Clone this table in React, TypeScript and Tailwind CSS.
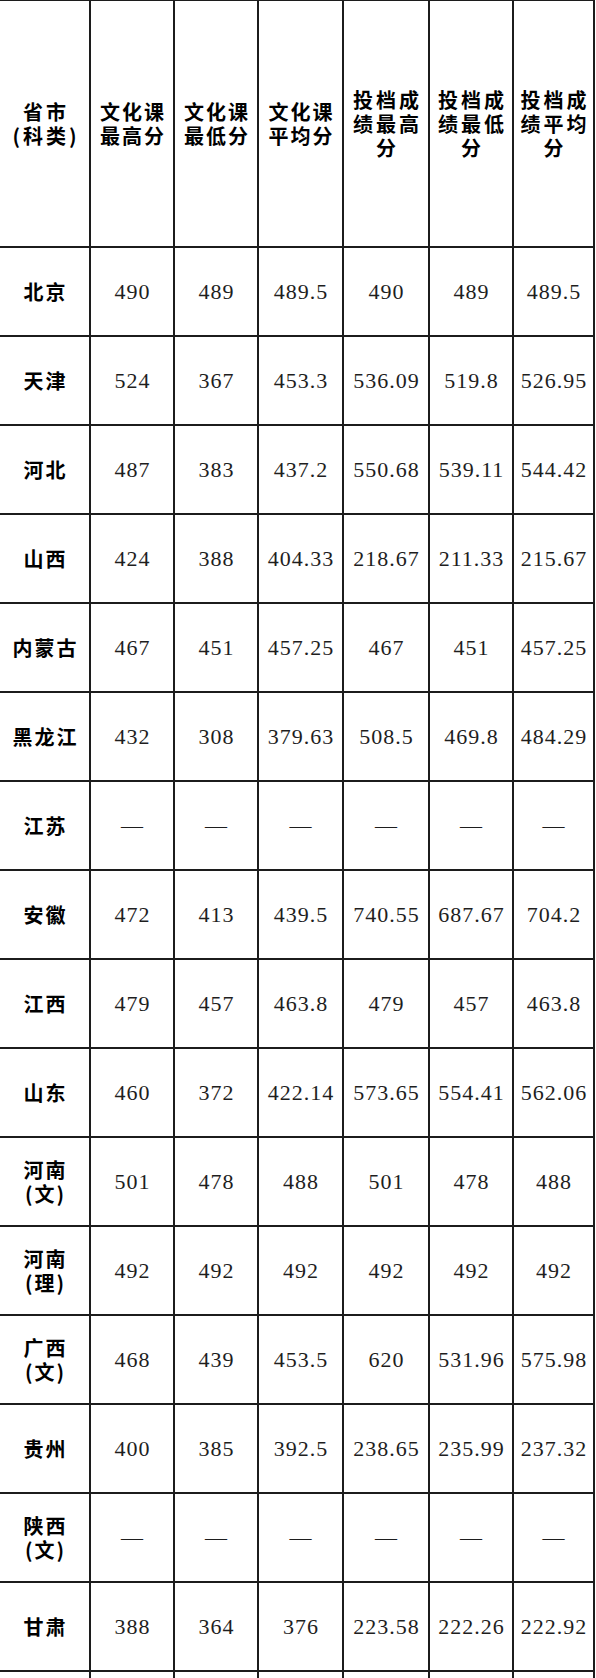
const rows: string[][] = [
  ["北京", "490", "489", "489.5", "490", "489", "489.5"],
  ["天津", "524", "367", "453.3", "536.09", "519.8", "526.95"],
  ["河北", "487", "383", "437.2", "550.68", "539.11", "544.42"],
  ["山西", "424", "388", "404.33", "218.67", "211.33", "215.67"],
  ["内蒙古", "467", "451", "457.25", "467", "451", "457.25"],
  ["黑龙江", "432", "308", "379.63", "508.5", "469.8", "484.29"],
  ["江苏", "—", "—", "—", "—", "—", "—"],
  ["安徽", "472", "413", "439.5", "740.55", "687.67", "704.2"],
  ["江西", "479", "457", "463.8", "479", "457", "463.8"],
  ["山东", "460", "372", "422.14", "573.65", "554.41", "562.06"],
  ["河南|(文)", "501", "478", "488", "501", "478", "488"],
  ["河南|(理)", "492", "492", "492", "492", "492", "492"],
  ["广西|(文)", "468", "439", "453.5", "620", "531.96", "575.98"],
  ["贵州", "400", "385", "392.5", "238.65", "235.99", "237.32"],
  ["陕西|(文)", "—", "—", "—", "—", "—", "—"],
  ["甘肃", "388", "364", "376", "223.58", "222.26", "222.92"],
  ["", "", "", "", "", "", ""],
];

const headers: string[][] = [
  ["省市", "(科类)"],
  ["文化课", "最高分"],
  ["文化课", "最低分"],
  ["文化课", "平均分"],
  ["投档成", "绩最高", "分"],
  ["投档成", "绩最低", "分"],
  ["投档成", "绩平均", "分"],
];

const cjk = { fontFamily: '"Noto Sans CJK SC", "Noto Sans", sans-serif' };
const serif = { fontFamily: '"Liberation Serif", "Noto Sans CJK SC", serif' };

export default function App() {
  return (
    <div className="min-h-screen w-[596px] bg-white">
      <div className="grid w-[595px] grid-cols-[91px_84px_84px_85px_86px_84px_81px] border-t border-[#1c1c1c]">
        {headers.map((lines, i) => (
          <div
            key={i}
            className="flex h-[247px] flex-col items-center justify-center border-b-2 border-r-2 border-[#1c1c1c] text-[20px] font-bold leading-[24px] text-black"
            style={cjk}
          >
            {lines.map((line) => (
              <span
                key={line}
                className={i === 0 || i >= 4 ? "pl-[3px] tracking-[3px]" : "pl-[2px] tracking-[2px]"}
              >
                {line}
              </span>
            ))}
          </div>
        ))}
        {rows.map((row, r) =>
          row.map((cell, c) =>
            c === 0 ? (
              <div
                key={`${r}-${c}`}
                className="flex h-[89px] flex-col items-center justify-center border-b-2 border-r-2 border-[#1c1c1c] text-[20px] font-bold leading-[24px] text-black"
                style={cjk}
              >
                {cell.split("|").map((line) => (
                  <span key={line} className="pl-[2px] tracking-[2px]">
                    {line}
                  </span>
                ))}
              </div>
            ) : (
              <div
                key={`${r}-${c}`}
                className="flex h-[89px] items-center justify-center border-b-2 border-r-2 border-[#1c1c1c] pl-px text-[22px] tracking-[1px] text-[#1e1e1e]"
                style={serif}
              >
                {cell}
              </div>
            )
          )
        )}
      </div>
    </div>
  );
}
